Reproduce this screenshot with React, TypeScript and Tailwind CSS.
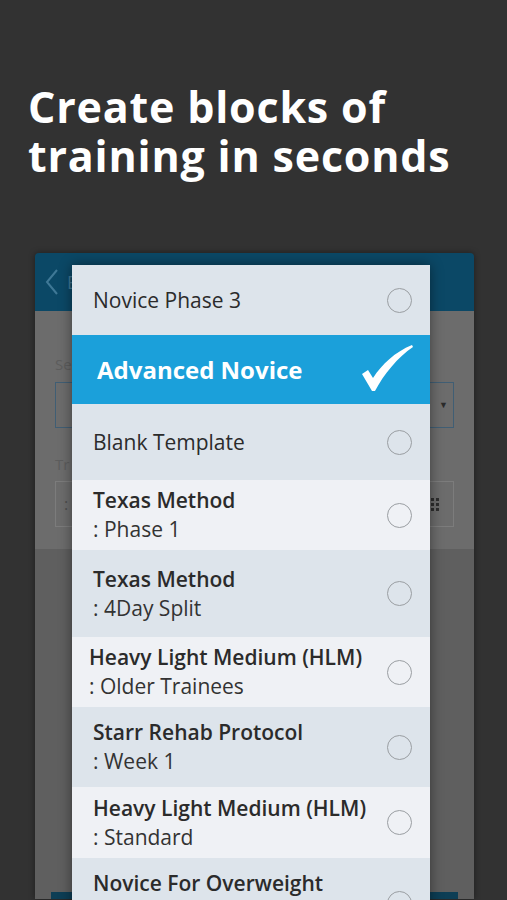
import React from "react";

type Item = { title: string; sub?: string; h: number; tone: "a" | "b"; pl?: string; selected?: boolean; top?: boolean };

const items: Item[] = [
  { title: "Novice Phase 3", h: 70, tone: "a" },
  { title: "Advanced Novice", h: 69, tone: "a", selected: true },
  { title: "Blank Template", h: 76, tone: "a" },
  { title: "Texas Method", sub: ": Phase 1", h: 70, tone: "b" },
  { title: "Texas Method", sub: ": 4Day Split", h: 87, tone: "a" },
  { title: "Heavy Light Medium (HLM)", sub: ": Older Trainees", h: 70, tone: "b", pl: "pl-[17px]" },
  { title: "Starr Rehab Protocol", sub: ": Week 1", h: 80, tone: "a" },
  { title: "Heavy Light Medium (HLM)", sub: ": Standard", h: 71, tone: "b" },
  { title: "Novice For Overweight", h: 80, tone: "a", top: true },
];

function Radio({ className = "" }: { className?: string }) {
  return <span className={`block h-[25px] w-[25px] shrink-0 rounded-full border-[1.5px] border-[#9a9ea2] ${className}`} />;
}

function Check() {
  return (
    <svg viewBox="0 0 52 50" className="h-[50px] w-[52px] shrink-0">
      <path
        d="M0 29 L6 25 L11 33 C20 19 33 7 50 0 L51 2 C36 12 22 29 13 46 L10 46 Z"
        fill="#ffffff"
      />
    </svg>
  );
}

function Row({ item }: { item: Item }) {
  if (item.selected) {
    return (
      <div className="flex items-center justify-between bg-[#1ba0da] pl-[25px] pr-[16px]" style={{ height: item.h }}>
        <span className="text-[24px] font-bold text-white">{item.title}</span>
        <Check />
      </div>
    );
  }
  const twoLine = item.sub !== undefined || item.top;
  return (
    <div
      className={`flex justify-between pr-[18px] ${item.top ? "items-start pt-[11px]" : "items-center"} ${item.pl ?? "pl-[21px]"} ${
        item.tone === "a" ? "bg-[#dde4eb]" : "bg-[#eff1f5]"
      }`}
      style={{ height: item.h }}
    >
      <div className="flex flex-col text-[#2b2b2b]">
        <span className={`text-[21px] leading-[29px] ${twoLine ? "font-semibold" : "font-medium"}`}>{item.title}</span>
        {item.sub ? <span className="text-[21px] leading-[29px] text-[#333]">{item.sub}</span> : null}
      </div>
      <Radio className={item.top ? "mt-[22px]" : ""} />
    </div>
  );
}

export default function App() {
  return (
    <div className="h-[900px] overflow-hidden bg-[#323232] font-['Open_Sans',sans-serif]">
      <h1 className="px-[28px] pt-[82px] text-[43px] font-bold leading-[49px] tracking-[0.8px] text-white">
        Create blocks of
        <br />
        training in seconds
      </h1>

      <div className="relative ml-[35px] mt-[73px] w-[439px]">
        {/* dimmed app screen */}
        <div className="overflow-hidden rounded-t-[4px] shadow-[0_0_6px_rgba(0,0,0,0.4)]">
          <div className="flex h-[58px] items-center gap-[8px] bg-[#0b4866] pl-[10px]">
            <svg viewBox="0 0 14 26" className="h-[26px] w-[14px]">
              <path d="M12 1 L2 13 L12 25" fill="none" stroke="#3f7896" strokeWidth={2} />
            </svg>
            <span className="text-[18px] text-[#3f7896]">E</span>
          </div>
          <div className="bg-[#6c6c6c] px-[20px] pb-[22px] pt-[42px]">
            <div className="text-[15px] text-[#5d5d5d]">Se</div>
            <div className="mt-[6px] flex h-[46px] items-center justify-end border-[1.5px] border-[#405e74] pr-[5px]">
              <span className="text-[9px] text-[#2b2b2b]">▼</span>
            </div>
            <div className="mt-[25px] text-[15px] text-[#5d5d5d]">Tr</div>
            <div className="mt-[6px] flex h-[46px] items-center justify-between border border-[#7c7c7c] pl-[8px] pr-[14px]">
              <span className="text-[16px] text-[#4e4e4e]">:</span>
              <span className="grid grid-cols-2 gap-[2px]">
                {[0, 1, 2, 3, 4, 5].map((i) => (
                  <span key={i} className="h-[3px] w-[3px] bg-[#2e2e2e]" />
                ))}
              </span>
            </div>
          </div>
          <div className="flex h-[350px] flex-col justify-end bg-[#5f5f5f] px-[16px]">
            <div className="h-[7px] bg-[#0d3e55]" />
          </div>
        </div>

        {/* picker dialog */}
        <div className="absolute left-[37px] top-[12px] w-[358px] shadow-[0_0_12px_rgba(0,0,0,0.45)]">
          {items.map((it, i) => (
            <Row key={i} item={it} />
          ))}
        </div>
      </div>
    </div>
  );
}
